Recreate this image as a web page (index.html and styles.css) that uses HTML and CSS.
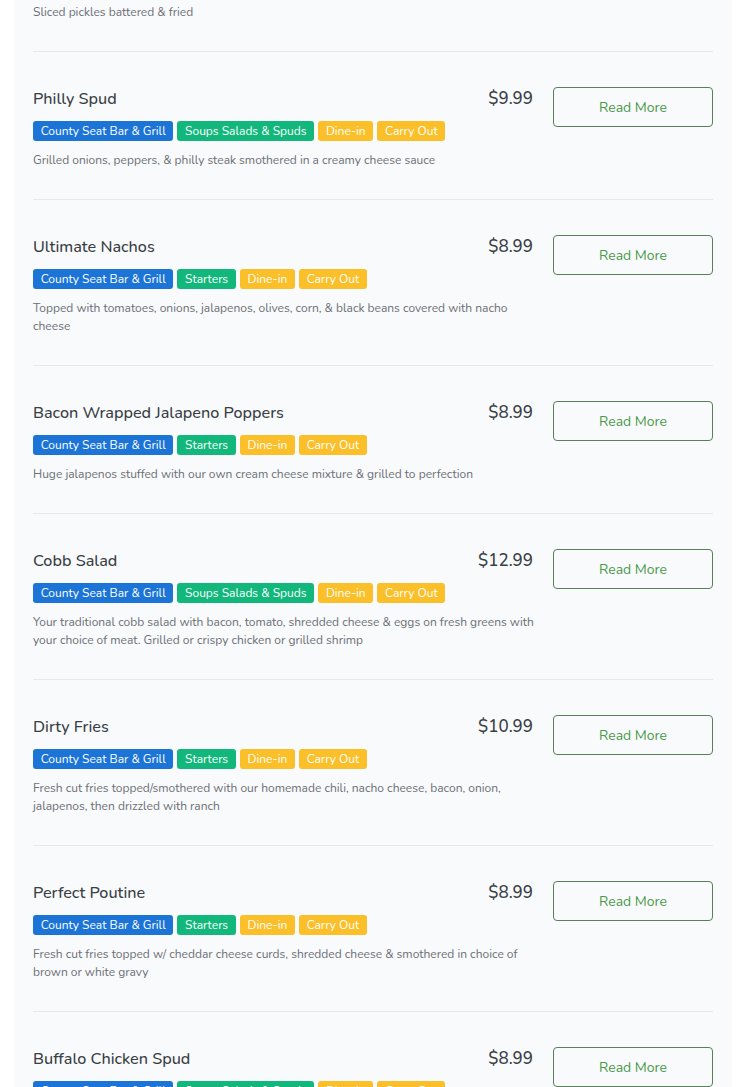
FILE: index.html
```html
<!DOCTYPE html>
<html lang="en">
<head>
<meta charset="utf-8">
<title>Menu</title>
<link rel="stylesheet" href="styles.css">
</head>
<body>
<div class="card">
  <div class="item first">
    <div class="info">
      <p class="desc">Sliced pickles battered &amp; fried</p>
    </div>
  </div>

  <div class="item">
    <div class="info">
      <div class="head"><h3 class="title">Philly Spud</h3><span class="price">$9.99</span></div>
      <div class="tags"><span class="tag blue">County Seat Bar &amp; Grill</span><span class="tag green">Soups Salads &amp; Spuds</span><span class="tag yellow">Dine-in</span><span class="tag yellow">Carry Out</span></div>
      <p class="desc">Grilled onions, peppers, &amp; philly steak smothered in a creamy cheese sauce</p>
    </div>
    <a class="btn" href="#">Read More</a>
  </div>

  <div class="item">
    <div class="info">
      <div class="head"><h3 class="title">Ultimate Nachos</h3><span class="price">$8.99</span></div>
      <div class="tags"><span class="tag blue">County Seat Bar &amp; Grill</span><span class="tag green">Starters</span><span class="tag yellow">Dine-in</span><span class="tag yellow">Carry Out</span></div>
      <p class="desc">Topped with tomatoes, onions, jalapenos, olives, corn, &amp; black beans covered with nacho cheese</p>
    </div>
    <a class="btn" href="#">Read More</a>
  </div>

  <div class="item">
    <div class="info">
      <div class="head"><h3 class="title">Bacon Wrapped Jalapeno Poppers</h3><span class="price">$8.99</span></div>
      <div class="tags"><span class="tag blue">County Seat Bar &amp; Grill</span><span class="tag green">Starters</span><span class="tag yellow">Dine-in</span><span class="tag yellow">Carry Out</span></div>
      <p class="desc">Huge jalapenos stuffed with our own cream cheese mixture &amp; grilled to perfection</p>
    </div>
    <a class="btn" href="#">Read More</a>
  </div>

  <div class="item">
    <div class="info">
      <div class="head"><h3 class="title">Cobb Salad</h3><span class="price">$12.99</span></div>
      <div class="tags"><span class="tag blue">County Seat Bar &amp; Grill</span><span class="tag green">Soups Salads &amp; Spuds</span><span class="tag yellow">Dine-in</span><span class="tag yellow">Carry Out</span></div>
      <p class="desc">Your traditional cobb salad with bacon, tomato, shredded cheese &amp; eggs on fresh greens with your choice of meat. Grilled or crispy chicken or grilled shrimp</p>
    </div>
    <a class="btn" href="#">Read More</a>
  </div>

  <div class="item">
    <div class="info">
      <div class="head"><h3 class="title">Dirty Fries</h3><span class="price">$10.99</span></div>
      <div class="tags"><span class="tag blue">County Seat Bar &amp; Grill</span><span class="tag green">Starters</span><span class="tag yellow">Dine-in</span><span class="tag yellow">Carry Out</span></div>
      <p class="desc">Fresh cut fries topped/smothered with our homemade chili, nacho cheese, bacon, onion, jalapenos, then drizzled with ranch</p>
    </div>
    <a class="btn" href="#">Read More</a>
  </div>

  <div class="item">
    <div class="info">
      <div class="head"><h3 class="title">Perfect Poutine</h3><span class="price">$8.99</span></div>
      <div class="tags"><span class="tag blue">County Seat Bar &amp; Grill</span><span class="tag green">Starters</span><span class="tag yellow">Dine-in</span><span class="tag yellow">Carry Out</span></div>
      <p class="desc">Fresh cut fries topped w/ cheddar cheese curds, shredded cheese &amp; smothered in choice of brown or white gravy</p>
    </div>
    <a class="btn" href="#">Read More</a>
  </div>

  <div class="item">
    <div class="info">
      <div class="head"><h3 class="title">Buffalo Chicken Spud</h3><span class="price">$8.99</span></div>
      <div class="tags"><span class="tag blue">County Seat Bar &amp; Grill</span><span class="tag green">Soups Salads &amp; Spuds</span><span class="tag yellow">Dine-in</span><span class="tag yellow">Carry Out</span></div>
      <p class="desc">Buffalo chicken on a loaded spud</p>
    </div>
    <a class="btn" href="#">Read More</a>
  </div>
</div>
</body>
</html>
```

FILE: styles.css
```css
html, body {
  margin: 0;
  padding: 0;
  background: #ffffff;
}

body {
  font-family: "Nunito", "Open Sans", "Noto Sans", sans-serif;
  color: #333;
  height: 1087px;
  overflow: hidden;
}

.card {
  margin: 0 13px 0 14px;
  background: #f9fafc;
  padding: 0 19px;
}

.item {
  display: flex;
  gap: 20px;
  align-items: flex-start;
  padding: 35px 0 30px;
  border-bottom: 1px solid #e6e8ec;
}

.item.first {
  padding-top: 3px;
}

.info {
  flex: 1;
  min-width: 0;
}

.head {
  display: flex;
  justify-content: space-between;
  align-items: flex-start;
  height: 24px;
}

.title {
  margin: 0;
  font-size: 16.2px;
  font-weight: 500;
  line-height: 24px;
  color: #3a3f45;
}

.price {
  font-size: 17px;
  font-weight: 500;
  line-height: 24px;
  color: #3a3f45;
}

.tags {
  display: flex;
  gap: 4px;
  margin-top: 10px;
}

.tag {
  display: inline-block;
  height: 20px;
  line-height: 20px;
  padding: 0 7.7px;
  border-radius: 3px;
  font-size: 12px;
  color: #fff;
  white-space: nowrap;
}

.tag.blue { background: #1b74d6; }
.tag.green { background: #12b77c; }
.tag.yellow { background: #fbbf29; }

.desc {
  margin: 10px -6px 0 0;
  font-size: 12px;
  line-height: 18px;
  color: #6b6f75;
}

.item.first .desc {
  margin-top: 0;
}

.btn {
  flex: 0 0 160px;
  box-sizing: border-box;
  height: 40px;
  display: flex;
  align-items: center;
  justify-content: center;
  border: 1px solid #5a7f5a;
  border-radius: 4px;
  color: #4a9a4a;
  font-size: 14px;
  text-decoration: none;
  background: transparent;
}
```
